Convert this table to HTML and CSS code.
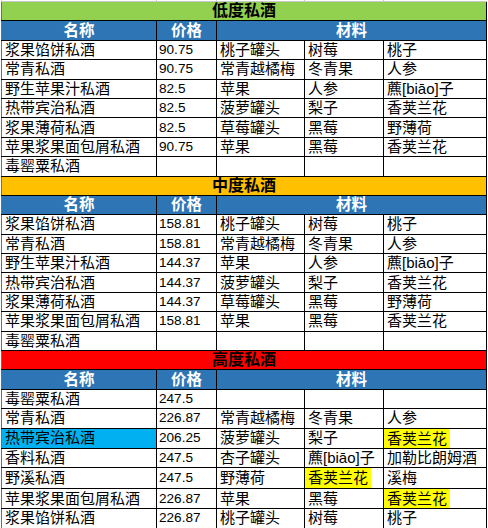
FILE: index.html
```html
<!DOCTYPE html>
<html lang="zh">
<head>
<meta charset="utf-8">
<link rel="stylesheet" href="styles.css">
</head>
<body>
<div class="sheet">
  <div class="topstrip">
    <span class="g g1"></span><span class="g g2"></span><span class="g g3"></span><span class="g g4"></span>
  </div>
  <table class="grid">
    <colgroup>
      <col class="c-name"><col class="c-price"><col class="c-m1"><col class="c-m2"><col class="c-m3">
    </colgroup>
    <tbody>
      <tr class="title green"><td colspan="5">低度私酒</td></tr>
      <tr class="head"><td>名称</td><td>价格</td><td colspan="3">材料</td></tr>
      <tr><td>浆果馅饼私酒</td><td class="price">90.75</td><td>桃子罐头</td><td>树莓</td><td>桃子</td></tr>
      <tr><td>常青私酒</td><td class="price">90.75</td><td>常青越橘梅</td><td>冬青果</td><td>人参</td></tr>
      <tr><td>野生苹果汁私酒</td><td class="price">82.5</td><td>苹果</td><td>人参</td><td>藨[biāo]子</td></tr>
      <tr><td>热带宾治私酒</td><td class="price">82.5</td><td>菠萝罐头</td><td>梨子</td><td>香荚兰花</td></tr>
      <tr><td>浆果薄荷私酒</td><td class="price">82.5</td><td>草莓罐头</td><td>黑莓</td><td>野薄荷</td></tr>
      <tr><td>苹果浆果面包屑私酒</td><td class="price">90.75</td><td>苹果</td><td>黑莓</td><td>香荚兰花</td></tr>
      <tr><td>毒罂粟私酒</td><td class="price"></td><td></td><td></td><td></td></tr>

      <tr class="title orange"><td colspan="5">中度私酒</td></tr>
      <tr class="head"><td>名称</td><td>价格</td><td colspan="3">材料</td></tr>
      <tr><td>浆果馅饼私酒</td><td class="price">158.81</td><td>桃子罐头</td><td>树莓</td><td>桃子</td></tr>
      <tr><td>常青私酒</td><td class="price">158.81</td><td>常青越橘梅</td><td>冬青果</td><td>人参</td></tr>
      <tr><td>野生苹果汁私酒</td><td class="price">144.37</td><td>苹果</td><td>人参</td><td>藨[biāo]子</td></tr>
      <tr><td>热带宾治私酒</td><td class="price">144.37</td><td>菠萝罐头</td><td>梨子</td><td>香荚兰花</td></tr>
      <tr><td>浆果薄荷私酒</td><td class="price">144.37</td><td>草莓罐头</td><td>黑莓</td><td>野薄荷</td></tr>
      <tr><td>苹果浆果面包屑私酒</td><td class="price">158.81</td><td>苹果</td><td>黑莓</td><td>香荚兰花</td></tr>
      <tr><td>毒罂粟私酒</td><td class="price"></td><td></td><td></td><td></td></tr>

      <tr class="title red"><td colspan="5">高度私酒</td></tr>
      <tr class="head"><td>名称</td><td>价格</td><td colspan="3">材料</td></tr>
      <tr><td>毒罂粟私酒</td><td class="price">247.5</td><td></td><td></td><td></td></tr>
      <tr><td>常青私酒</td><td class="price">226.87</td><td>常青越橘梅</td><td>冬青果</td><td>人参</td></tr>
      <tr><td class="cyan">热带宾治私酒</td><td class="price">206.25</td><td>菠萝罐头</td><td>梨子</td><td class="hl"><span>香荚兰花</span></td></tr>
      <tr><td>香料私酒</td><td class="price">247.5</td><td>杏子罐头</td><td>藨[biāo]子</td><td>加勒比朗姆酒</td></tr>
      <tr><td>野溪私酒</td><td class="price">247.5</td><td>野薄荷</td><td class="hl"><span>香荚兰花</span></td><td>溪梅</td></tr>
      <tr><td>苹果浆果面包屑私酒</td><td class="price">226.87</td><td>苹果</td><td>黑莓</td><td class="hl"><span>香荚兰花</span></td></tr>
      <tr><td>浆果馅饼私酒</td><td class="price">226.87</td><td>桃子罐头</td><td>树莓</td><td>桃子</td></tr>
    </tbody>
  </table>
</div>
</body>
</html>
```

FILE: styles.css
```css
html, body {
  margin: 0;
  padding: 0;
  background: #ffffff;
}

.sheet {
  width: 488px;
  height: 528px;
  overflow: hidden;
  font-family: "Liberation Sans", "Noto Sans CJK SC", sans-serif;
  color: #000;
}

.topstrip {
  position: relative;
  height: 1px;
  margin-left: 1px;
  width: 485px;
  border-bottom: 1px solid #c8c8c8;
  border-left: 1px solid #c8c8c8;
}

.topstrip .g {
  position: absolute;
  top: 0;
  width: 1px;
  height: 1px;
  background: #c8c8c8;
}
.topstrip .g1 { left: 154px; }
.topstrip .g2 { left: 214px; }
.topstrip .g3 { left: 302px; }
.topstrip .g4 { left: 381px; }

.grid {
  margin-left: 1px;
  width: 485px;
  table-layout: fixed;
  border-collapse: collapse;
  font-size: 15px;
}

.c-name { width: 155px; }
.c-price { width: 60px; }
.c-m1 { width: 88px; }
.c-m2 { width: 79px; }
.c-m3 { width: 103px; }

.grid td {
  border: 1px solid #000;
  height: 18.4px;
  padding: 0 0 0 3px;
  line-height: 18px;
  white-space: nowrap;
  overflow: hidden;
  vertical-align: middle;
}

.grid tr:first-child td { border-top: none; }
.grid td:first-child { border-left: 1px solid #6f6f6f; }

.grid td.price {
  font-size: 13.6px;
  padding-left: 2px;
}

.title td {
  text-align: center;
  font-weight: bold;
  font-size: 16px;
  padding-left: 0;
}
.green td { background: #92d050; }
.orange td { background: #ffc000; }
.red td { background: #ff0000; }

.head td {
  background: #2e75b6;
  color: #ffffff;
  text-align: center;
  font-weight: bold;
  font-size: 15.5px;
  padding-left: 0;
}

.grid td.cyan { background: #00b0f0; }

.grid td.hl { padding-left: 0; }
.grid td.hl span {
  display: inline-block;
  background: #ffff00;
  padding: 0 3px 0 3px;
  line-height: 19.4px;
  vertical-align: top;
}
```
